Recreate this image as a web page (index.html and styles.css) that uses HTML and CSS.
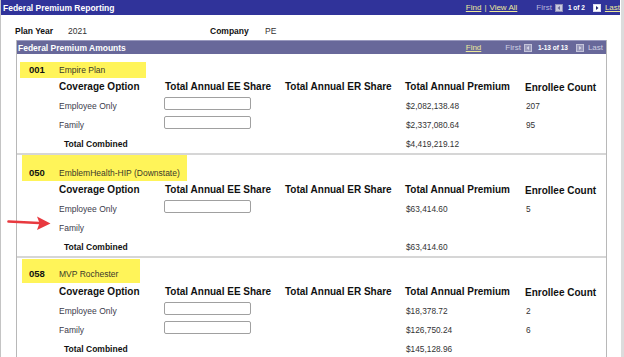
FILE: index.html
```html
<!DOCTYPE html>
<html lang="en">
<head>
    <meta charset="UTF-8">
    <meta name="viewport" content="width=device-width, initial-scale=1.0">
    <title>Federal Premium Reporting</title>
    <link rel="stylesheet" href="styles.css">
</head>
<body>

    <div class="page">
        <div class="titlebar">
            <span class="title">Federal Premium Reporting</span>
            <div class="nav">
                <a class="link" href="#">Find</a>
                <span class="sep">|</span>
                <a class="link" href="#">View All</a>
                <span class="dim first">First</span>
                <svg class="btn" viewBox="0 0 8 8"><rect x="0.5" y="0.5" width="7" height="7" fill="#c9c9df" stroke="#8f8fb8"/><path d="M5 2 L2.5 4 L5 6 Z" fill="#6d6d9a"/></svg>
                <span class="count">1 of 2</span>
                <svg class="btn" viewBox="0 0 8 8"><rect x="0.5" y="0.5" width="7" height="7" fill="#fff" stroke="#dcdcf0"/><path d="M3 2 L5.5 4 L3 6 Z" fill="#1f2370"/></svg>
                <a class="link last" href="#">Last</a>
            </div>
        </div>

        <div class="keys">
            <span class="key-label">Plan Year</span>
            <span class="key-value">2021</span>
            <span class="key-label">Company</span>
            <span class="key-value">PE</span>
        </div>

        <div class="grid">
            <div class="grid-head">
                <span class="grid-title">Federal Premium Amounts</span>
                <div class="nav">
                    <a class="link" href="#">Find</a>
                    <span class="dim first">First</span>
                    <svg class="btn" viewBox="0 0 8 8"><rect x="0.5" y="0.5" width="7" height="7" fill="#9898bb" stroke="#c4c4da"/><path d="M5 2 L2.5 4 L5 6 Z" fill="#d6d6e6"/></svg>
                    <span class="count">1-13 of 13</span>
                    <svg class="btn" viewBox="0 0 8 8"><rect x="0.5" y="0.5" width="7" height="7" fill="#9898bb" stroke="#c4c4da"/><path d="M3 2 L5.5 4 L3 6 Z" fill="#d6d6e6"/></svg>
                    <span class="dim last">Last</span>
                </div>
            </div>

            <!-- 001 -->
            <div class="plan plan-a">
                <div class="hl">
                    <span class="code">001</span>
                    <span class="plan-name">Empire Plan</span>
                </div>
                <div class="row head">
                    <span></span>
                    <span>Coverage Option</span>
                    <span>Total Annual EE Share</span>
                    <span>Total Annual ER Share</span>
                    <span>Total Annual Premium</span>
                    <span class="count-head">Enrollee Count</span>
                </div>
                <div class="row line">
                    <span></span>
                    <span>Employee Only</span>
                    <input type="text" class="share">
                    <span></span>
                    <span>$2,082,138.48</span>
                    <span>207</span>
                </div>
                <div class="row line">
                    <span></span>
                    <span>Family</span>
                    <input type="text" class="share">
                    <span></span>
                    <span>$2,337,080.64</span>
                    <span>95</span>
                </div>
                <div class="row line">
                    <span></span>
                    <span class="total">Total Combined</span>
                    <span></span>
                    <span></span>
                    <span>$4,419,219.12</span>
                    <span></span>
                </div>
            </div>

            <!-- 050 -->
            <div class="plan plan-b">
                <div class="hl">
                    <span class="code">050</span>
                    <span class="plan-name">EmblemHealth-HIP (Downstate)</span>
                </div>
                <div class="row head">
                    <span></span>
                    <span>Coverage Option</span>
                    <span>Total Annual EE Share</span>
                    <span>Total Annual ER Share</span>
                    <span>Total Annual Premium</span>
                    <span class="count-head">Enrollee Count</span>
                </div>
                <div class="row line">
                    <span></span>
                    <span>Employee Only</span>
                    <input type="text" class="share">
                    <span></span>
                    <span>$63,414.60</span>
                    <span>5</span>
                </div>
                <div class="row line">
                    <span></span>
                    <span>Family</span>
                    <span></span>
                    <span></span>
                    <span></span>
                    <span></span>
                </div>
                <div class="row line">
                    <span></span>
                    <span class="total">Total Combined</span>
                    <span></span>
                    <span></span>
                    <span>$63,414.60</span>
                    <span></span>
                </div>
                <svg class="pointer" viewBox="0 0 44 16">
                    <path d="M1.5 6.5 L32 8" stroke="#e8393f" stroke-width="2.6" stroke-linecap="round"/>
                    <path d="M30 1.5 L43.5 8.4 L30 15 L32.5 8 Z" fill="#e8393f"/>
                </svg>
            </div>

            <!-- 058 -->
            <div class="plan plan-c">
                <div class="hl">
                    <span class="code">058</span>
                    <span class="plan-name">MVP Rochester</span>
                </div>
                <div class="row head">
                    <span></span>
                    <span>Coverage Option</span>
                    <span>Total Annual EE Share</span>
                    <span>Total Annual ER Share</span>
                    <span>Total Annual Premium</span>
                    <span class="count-head">Enrollee Count</span>
                </div>
                <div class="row line">
                    <span></span>
                    <span>Employee Only</span>
                    <input type="text" class="share">
                    <span></span>
                    <span>$18,378.72</span>
                    <span>2</span>
                </div>
                <div class="row line">
                    <span></span>
                    <span>Family</span>
                    <input type="text" class="share">
                    <span></span>
                    <span>$126,750.24</span>
                    <span>6</span>
                </div>
                <div class="row line">
                    <span></span>
                    <span class="total">Total Combined</span>
                    <span></span>
                    <span></span>
                    <span>$145,128.96</span>
                    <span></span>
                </div>
            </div>
        </div>
    </div>

</body>
</html>
```

FILE: styles.css
```css
body {
    font-family: "Liberation Sans", Arial, sans-serif;
    margin: 0;
    width: 624px;
    min-height: 100vh;
    box-sizing: border-box;
    border-right: 3px solid #dcdcdc;
    background-color: #fff;
    color: #333;
}

.page {
    width: 620px;
    min-height: 100vh;
    border-left: 1px solid #c4c4c4;
    box-sizing: border-box;
}

/* top bar */

.titlebar {
    height: 15px;
    background-color: #30339a;
    display: flex;
    align-items: center;
    justify-content: space-between;
    padding-left: 2px;
}

.title {
    color: #fff;
    font-weight: bold;
    font-size: 8.5px;
}

.nav {
    display: flex;
    align-items: center;
    font-size: 8px;
}

.link {
    color: #ece89a;
    text-decoration: underline;
}

.sep {
    color: #ece89a;
    margin: 0 3px;
}

.dim {
    color: #b9b9dc;
}

.nav .first {
    margin-left: 19px;
}

.btn {
    width: 8px;
    height: 8px;
    margin-left: 3px;
}

.count {
    color: #fff;
    font-weight: bold;
    font-size: 6.5px;
    margin: 0 5px;
}

.nav .last {
    margin-left: 4px;
}

/* key fields */

.keys {
    display: flex;
    padding: 10px 0 3px 14px;
    line-height: 12px;
    font-size: 8.5px;
}

.key-label {
    font-weight: bold;
    color: #111;
    width: 53px;
}

.keys .key-label + .key-value {
    width: 142px;
}

.keys .key-value:last-child {
    width: auto;
}

.key-label:nth-child(3) {
    width: 55px;
}

/* grid */

.grid {
    margin-left: 15px;
    width: 591px;
    box-sizing: border-box;
    border-left: 1px solid #b8b8b8;
    border-right: 1px solid #b8b8b8;
}

.grid-head {
    height: 14px;
    background-color: #68689a;
    border-top: 1px solid #9a9abf;
    box-sizing: border-box;
    display: flex;
    align-items: center;
    justify-content: space-between;
    padding: 0 3px 0 1px;
}

.grid-title {
    color: #fff;
    font-weight: bold;
    font-size: 8.5px;
}

.grid-head .first {
    margin-left: 24px;
    color: #cfcfe2;
}

.grid-head .last {
    color: #cfcfe2;
}

.grid-head .count {
    margin: 0 5px 0 6px;
}

.plan {
    position: relative;
    border-bottom: 2px solid #d6d6d6;
}

.plan-a {
    padding-top: 8px;
}

.plan-c {
    padding-top: 1px;
    border-bottom: none;
}

.hl {
    display: flex;
    align-items: flex-end;
    background-color: #fff459;
    margin-left: 5px;
    padding-left: 7px;
    height: 16px;
    line-height: 16px;
    box-sizing: border-box;
}

.plan-a .hl {
    margin-left: 3px;
    padding-left: 9px;
    width: 126px;
}

.plan-b .hl {
    width: 165px;
    height: 26px;
}

.plan-c .hl {
    width: 118px;
    height: 24px;
    padding-bottom: 1px;
}

.code {
    width: 30px;
    font-weight: bold;
    font-size: 9.5px;
    color: #111;
}

.plan-name {
    font-size: 8.5px;
    color: #3a3a2a;
}

.row {
    display: grid;
    grid-template-columns: 42px 106px 120px 120px 120px 1fr;
    align-items: center;
}

.row.head {
    height: 14px;
    margin-top: 1px;
    margin-bottom: 3px;
    font-size: 10px;
    font-weight: bold;
    color: #111;
}

.count-head {
    padding-top: 3px;
}

.row.line {
    height: 19px;
    font-size: 8.5px;
    color: #3b3b4b;
}

.row.line span:nth-child(5),
.row.line span:nth-child(6) {
    font-size: 8.3px;
    color: #333;
    padding-left: 1px;
}

.share {
    align-self: start;
    margin: 1px 0 0 -1px;
    width: 87px;
    height: 13px;
    box-sizing: border-box;
    border: 1px solid #a0a0a0;
    border-radius: 2px;
    padding: 0;
    background-color: #fff;
}

.total {
    font-weight: bold;
    color: #111;
    padding-left: 5px;
}

.pointer {
    position: absolute;
    left: -10px;
    top: 60px;
    width: 44px;
    height: 16px;
}
```
